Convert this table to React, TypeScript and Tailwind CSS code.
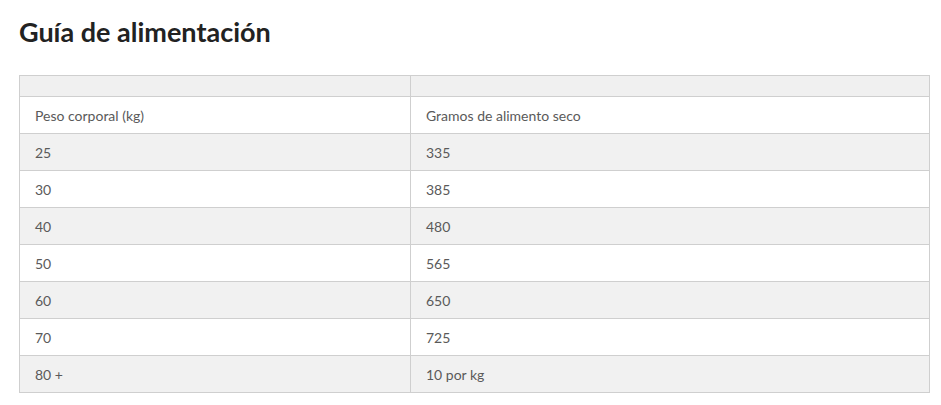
import React from 'react';

const rows: [string, string][] = [
  ['25', '335'],
  ['30', '385'],
  ['40', '480'],
  ['50', '565'],
  ['60', '650'],
  ['70', '725'],
  ['80 +', '10 por kg'],
];

export default function App() {
  return (
    <div className="min-h-[405px] bg-white px-[19px] pt-[14px]" style={{ fontFamily: 'Lato, "Noto Sans", sans-serif' }}>
      <h2 className="text-[27px] font-bold leading-[35px] text-[#222]">Guía de alimentación</h2>
      <table className="mt-[26px] w-[911px] table-fixed border-collapse text-[14px] text-[#5a5a5a]">
        <colgroup>
          <col className="w-[391px]" />
          <col />
        </colgroup>
        <thead>
          <tr className="h-[21px] bg-[#f0f0f0]">
            <th className="border border-[#cfcfcf] p-0" />
            <th className="border border-[#cfcfcf] p-0" />
          </tr>
        </thead>
        <tbody>
          <tr className="h-[37px] bg-white">
            <td className="border border-[#cfcfcf] px-[15px] font-normal">Peso corporal (kg)</td>
            <td className="border border-[#cfcfcf] px-[15px]">Gramos de alimento seco</td>
          </tr>
          {rows.map(([kg, g], i) => (
            <tr key={kg} className={`h-[37px] ${i % 2 === 0 ? 'bg-[#f1f1f1]' : 'bg-white'}`}>
              <td className="border border-[#cfcfcf] px-[15px]">{kg}</td>
              <td className="border border-[#cfcfcf] px-[15px]">{g}</td>
            </tr>
          ))}
        </tbody>
      </table>
    </div>
  );
}
